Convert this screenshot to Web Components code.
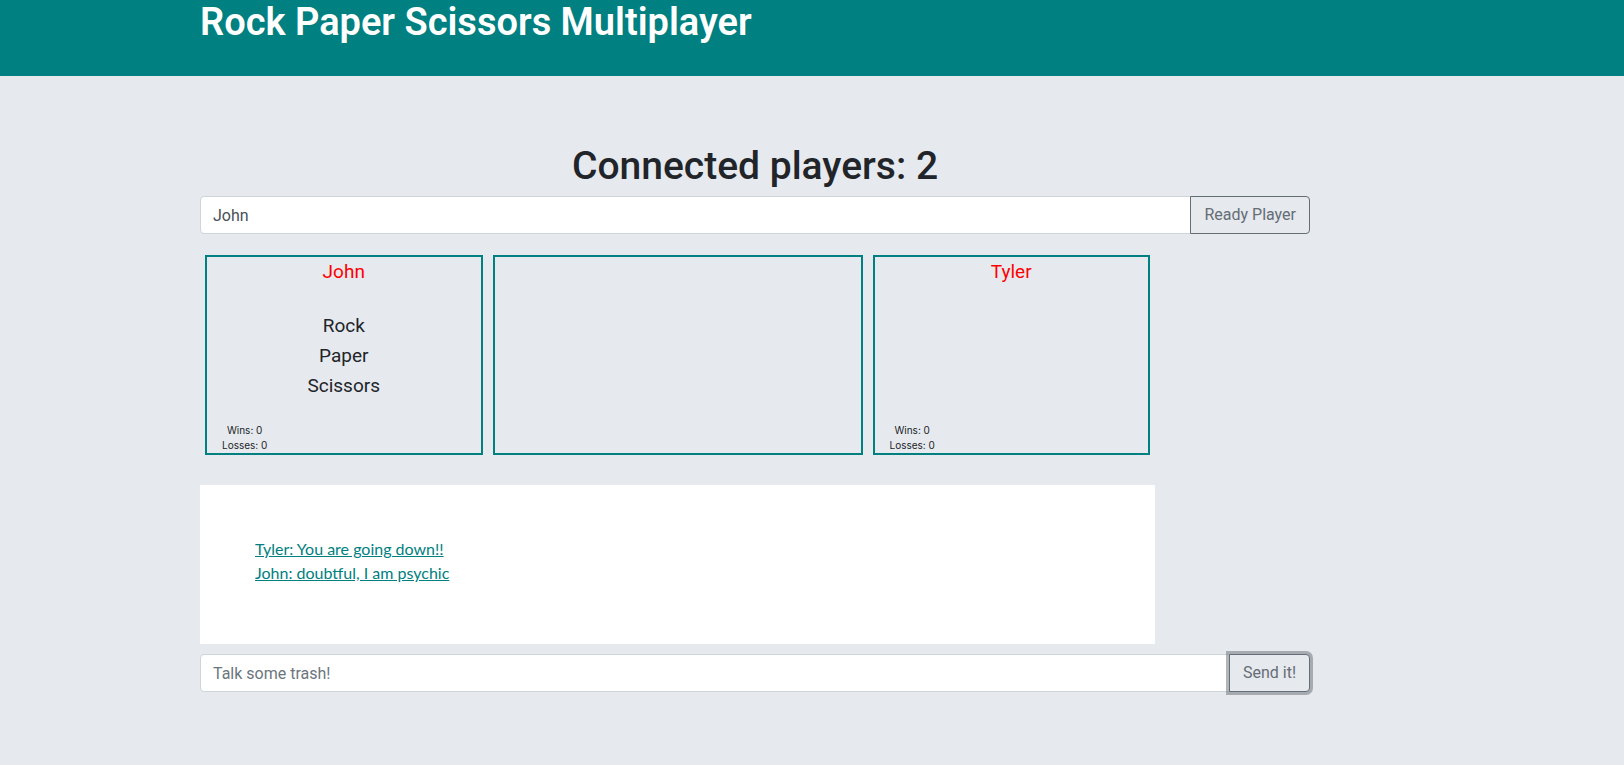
<!DOCTYPE html>
<html lang="en">
<head>
<meta charset="utf-8">
<meta name="viewport" content="width=device-width, initial-scale=1">
<title>Rock Paper Scissors Multiplayer</title>
<style>
  body { margin: 0; background: #e6e9ee; color: #212529; font: 16px/24px Roboto, "Open Sans", sans-serif; }
</style>
</head>
<body>
<rps-app></rps-app>

<script>
class RpsElement extends HTMLElement {
  constructor() {
    super();
    this.attachShadow({ mode: 'open' });
  }
  connectedCallback() {
    this.shadowRoot.innerHTML = `<style>*, :host { box-sizing: border-box; }</style>${this.render()}`;
  }
}

customElements.define('rps-header', class extends RpsElement {
  render() {
    return `
      <style>
        :host { display: block; background: #008080; color: #fff; padding: 0 20px 32px var(--gutter); }
        h1 { margin: 0; font-size: 38px; line-height: 44px; font-weight: 600; }
      </style>
      <h1><slot></slot></h1>`;
  }
});

customElements.define('rps-entry', class extends RpsElement {
  render() {
    const attr = name => this.getAttribute(name) || '';
    return `
      <style>
        :host { display: block; }
        form { display: flex; margin: 0; }
        input, button { font: inherit; line-height: 24px; padding: 6px 12px; margin: 0; }
        input {
          flex: 1; min-width: 0; height: 38px; color: #495057; background: #fff;
          border: 1px solid #ced4da; border-radius: 4px 0 0 4px; outline: none;
        }
        input::placeholder { color: #6c757d; opacity: 1; }
        button {
          position: relative; margin-left: -1px; padding: 6px 13px; color: #656d75; background: #e6e9ee;
          border: 1px solid #656d75; border-radius: 0 4px 4px 0; white-space: nowrap;
        }
        :host([active]) button { box-shadow: 0 0 0 3px rgba(101, 109, 117, .5); }
      </style>
      <form onsubmit="return false">
        <input type="text" aria-label="${attr('label')}" value="${attr('value')}" placeholder="${attr('placeholder')}">
        <button type="submit"><slot></slot></button>
      </form>`;
  }
});

customElements.define('rps-panel', class extends RpsElement {
  render() {
    return `
      <style>
        :host { display: block; min-height: 200px; border: 2px solid #008080; }
      </style>
      <slot></slot>`;
  }
});

customElements.define('rps-player', class extends RpsElement {
  render() {
    const choices = (this.getAttribute('choices') || '').split(' ').filter(Boolean);
    return `
      <style>
        :host { display: flex; flex-direction: column; min-height: 196px; font-size: 19px; line-height: 30px; text-align: center; }
        h2 { margin: 0; font: inherit; color: #f00; }
        .choices { margin-top: 24px; display: flex; flex-direction: column; align-items: center; }
        button { font: inherit; color: inherit; background: none; border: 0; padding: 0; cursor: pointer; }
        .score { margin: auto auto 0 15px; font: 10px/15px Inter, sans-serif; }
        .score p { margin: 0; }
      </style>
      <h2>${this.getAttribute('name')}</h2>
      <div class="choices">${choices.map(c => `<button type="button">${c}</button>`).join('')}</div>
      <div class="score"><p>Wins: ${this.getAttribute('wins')}</p><p>Losses: ${this.getAttribute('losses')}</p></div>`;
  }
});

customElements.define('rps-chat', class extends RpsElement {
  render() {
    return `
      <style>
        :host { display: block; min-height: 159px; padding: 52px 55px; background: #fff; color: #008080; font: 16px/24px Papyrus, Lato, sans-serif; }
        ::slotted(p) { margin: 0; text-decoration: underline; }
      </style>
      <slot></slot>`;
  }
});

customElements.define('rps-app', class extends RpsElement {
  render() {
    return `
      <style>
        :host { display: block; --gutter: 200px; }
        @media (max-width: 1000px) { :host { --gutter: 20px; } }
        main { padding: 66px 20px 40px var(--gutter); }
        .container { max-width: 1110px; }
        h2 { margin: 0 0 6px; font-size: 39px; line-height: 48px; font-weight: 500; text-align: center; }
        .board, rps-chat { max-width: 955px; }
        .board { display: grid; grid-template-columns: 3fr 4fr 3fr; gap: 10px; padding: 0 5px; margin: 21px 0 30px; }
        rps-chat { margin-bottom: 10px; }
      </style>
      <rps-header>Rock Paper Scissors Multiplayer</rps-header>
      <main>
        <div class="container">
          <h2>Connected players: 2</h2>
          <rps-entry label="Player name" value="John">Ready Player</rps-entry>
          <div class="board">
            <rps-panel><rps-player name="John" choices="Rock Paper Scissors" wins="0" losses="0"></rps-player></rps-panel>
            <rps-panel></rps-panel>
            <rps-panel><rps-player name="Tyler" wins="0" losses="0"></rps-player></rps-panel>
          </div>
          <rps-chat>
            <p>Tyler: You are going down!!</p>
            <p>John: doubtful, I am psychic</p>
          </rps-chat>
          <rps-entry label="Message" placeholder="Talk some trash!" active>Send it!</rps-entry>
        </div>
      </main>`;
  }
});
</script>
</body>
</html>
